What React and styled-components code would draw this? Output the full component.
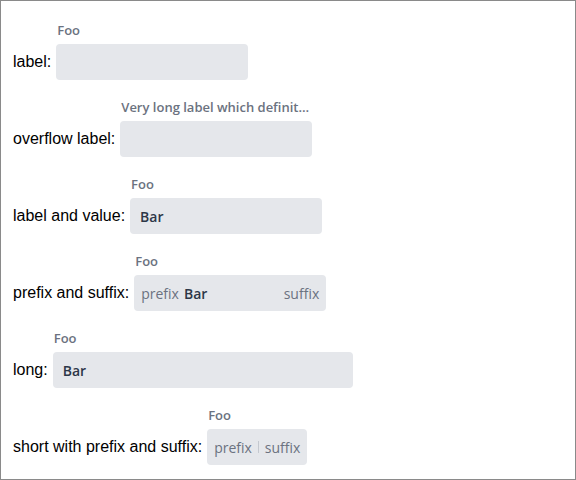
import React from 'react';
import styled, { createGlobalStyle } from 'styled-components';

const GlobalStyle = createGlobalStyle`
  html, body {
    margin: 0;
    padding: 0;
    background: #fff;
  }
  * {
    box-sizing: border-box;
  }
`;

const Frame = styled.div`
  width: 576px;
  height: 480px;
  border: 1px solid #8a8a8a;
  padding: 20px 12px;
  display: flex;
  flex-direction: column;
  gap: 18px;
  font-family: "Liberation Sans", Arial, sans-serif;
`;

const Row = styled.div`
  display: flex;
  align-items: flex-end;
  gap: 5px;
`;

const RowText = styled.span`
  font-size: 16px;
  line-height: 36px;
  color: #000;
  white-space: nowrap;
`;

const FieldWrap = styled.div`
  display: flex;
  flex-direction: column;
  gap: 5px;
  width: ${(p) => (p.width ? `${p.width}px` : 'auto')};
  min-width: 0;
`;

const FieldLabel = styled.label`
  font-family: "Open Sans", "Noto Sans", sans-serif;
  font-size: 13px;
  font-weight: 600;
  line-height: 18px;
  color: #6b7280;
  padding-left: 1px;
  white-space: nowrap;
  overflow: hidden;
  text-overflow: ellipsis;
`;

const Box = styled.div`
  height: 36px;
  background: #e5e7eb;
  border-radius: 4px;
  display: flex;
  align-items: center;
  gap: 5px;
  padding: 0 ${(p) => (p.$tight ? 7 : 10)}px;
  font-family: "Open Sans", "Noto Sans", sans-serif;
  font-size: 14px;
`;

const Value = styled.span`
  font-weight: 600;
  color: #2d3748;
`;

const Affix = styled.span`
  color: #6b7280;
  margin-left: ${(p) => (p.$end ? 'auto' : '0')};
`;

const Divider = styled.span`
  width: 1px;
  height: 12px;
  background: #c4c8cf;
  margin: 0 1px;
`;

const Field = ({ label, value, prefix, suffix, width = 192, divider }) => (
  <FieldWrap width={width}>
    <FieldLabel>{label}</FieldLabel>
    <Box $tight={!!prefix}>
      {prefix && <Affix>{prefix}</Affix>}
      {value && <Value>{value}</Value>}
      {divider && <Divider />}
      {suffix && <Affix $end={!divider}>{suffix}</Affix>}
    </Box>
  </FieldWrap>
);

export default function App() {
  return (
    <>
      <GlobalStyle />
      <Frame>
        <Row>
          <RowText>label:</RowText>
          <Field label="Foo" />
        </Row>
        <Row>
          <RowText>overflow label:</RowText>
          <Field label="Very long label which definitely overflows the field" />
        </Row>
        <Row>
          <RowText>label and value:</RowText>
          <Field label="Foo" value="Bar" />
        </Row>
        <Row>
          <RowText>prefix and suffix:</RowText>
          <Field label="Foo" value="Bar" prefix="prefix" suffix="suffix" />
        </Row>
        <Row>
          <RowText>long:</RowText>
          <Field label="Foo" value="Bar" width={300} />
        </Row>
        <Row>
          <RowText>short with prefix and suffix:</RowText>
          <Field label="Foo" prefix="prefix" suffix="suffix" width={0} divider />
        </Row>
      </Frame>
    </>
  );
}
